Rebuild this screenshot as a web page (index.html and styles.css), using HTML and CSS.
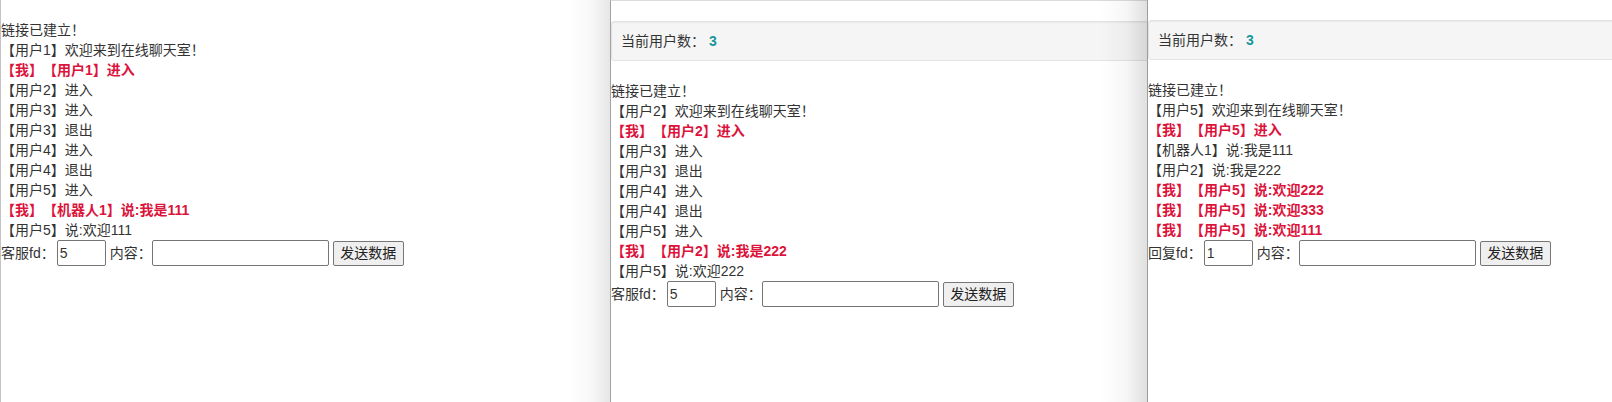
FILE: index.html
```html
<!DOCTYPE html>
<html lang="zh-CN">
<head>
<meta charset="utf-8">
<title>在线聊天室</title>
<link rel="stylesheet" href="styles.css">
</head>
<body>
<div class="desktop">
  <section class="win win-1">
    <div class="log">
      <div class="msg">链接已建立！</div>
      <div class="msg">【用户1】欢迎来到在线聊天室！</div>
      <div class="msg me">【我】【用户1】进入</div>
      <div class="msg">【用户2】进入</div>
      <div class="msg">【用户3】进入</div>
      <div class="msg">【用户3】退出</div>
      <div class="msg">【用户4】进入</div>
      <div class="msg">【用户4】退出</div>
      <div class="msg">【用户5】进入</div>
      <div class="msg me">【我】【机器人1】说:我是111</div>
      <div class="msg">【用户5】说:欢迎111</div>
    </div>
    <div class="form">
      <span class="label">客服fd：</span>
      <input class="fd" type="text" value="5">
      <span class="label label-gap">内容：</span>
      <input class="content" type="text">
      <button class="send" type="button">发送数据</button>
    </div>
  </section>

  <section class="win win-2">
    <div class="well">当前用户数： <b class="count">3</b></div>
    <div class="log">
      <div class="msg">链接已建立！</div>
      <div class="msg">【用户2】欢迎来到在线聊天室！</div>
      <div class="msg me">【我】【用户2】进入</div>
      <div class="msg">【用户3】进入</div>
      <div class="msg">【用户3】退出</div>
      <div class="msg">【用户4】进入</div>
      <div class="msg">【用户4】退出</div>
      <div class="msg">【用户5】进入</div>
      <div class="msg me">【我】【用户2】说:我是222</div>
      <div class="msg">【用户5】说:欢迎222</div>
    </div>
    <div class="form">
      <span class="label">客服fd：</span>
      <input class="fd" type="text" value="5">
      <span class="label label-gap">内容：</span>
      <input class="content" type="text">
      <button class="send" type="button">发送数据</button>
    </div>
  </section>

  <section class="win win-3">
    <div class="well">当前用户数： <b class="count">3</b></div>
    <div class="log">
      <div class="msg">链接已建立！</div>
      <div class="msg">【用户5】欢迎来到在线聊天室！</div>
      <div class="msg me">【我】【用户5】进入</div>
      <div class="msg">【机器人1】说:我是111</div>
      <div class="msg">【用户2】说:我是222</div>
      <div class="msg me">【我】【用户5】说:欢迎222</div>
      <div class="msg me">【我】【用户5】说:欢迎333</div>
      <div class="msg me">【我】【用户5】说:欢迎111</div>
    </div>
    <div class="form">
      <span class="label">回复fd：</span>
      <input class="fd" type="text" value="1">
      <span class="label label-gap">内容：</span>
      <input class="content" type="text">
      <button class="send" type="button">发送数据</button>
    </div>
  </section>
</div>
</body>
</html>
```

FILE: styles.css
```css
html, body {
  margin: 0;
  padding: 0;
  background: #fff;
}

body {
  font-family: "Liberation Sans", "Noto Sans CJK SC", sans-serif;
  font-size: 14px;
  line-height: 20px;
  color: #333;
  text-spacing-trim: space-all;
}

.desktop {
  display: flex;
  height: 402px;
  overflow: hidden;
}

.win {
  position: relative;
  flex: none;
  box-sizing: border-box;
  height: 402px;
  background: #fff;
  border-left: 1px solid #b4b4b4;
  padding-top: 20px;
}

.win-1 {
  width: 610px;
  border-left-color: #c4c4c4;
}

.win-2 {
  width: 537px;
  border-top: 1px solid #dcdcdc;
}

.win-3 {
  flex: 1;
}

.win-2::before,
.win-3::before {
  content: "";
  position: absolute;
  top: 0;
  bottom: 0;
  right: 100%;
  pointer-events: none;
}

.win-2::before {
  top: -1px;
  width: 42px;
  background: linear-gradient(to right, rgba(0, 0, 0, 0), rgba(0, 0, 0, 0.03) 55%, rgba(0, 0, 0, 0.1));
}

.win-3::before {
  width: 48px;
  background: linear-gradient(to right, rgba(0, 0, 0, 0), rgba(0, 0, 0, 0.035) 55%, rgba(0, 0, 0, 0.13));
}

.well {
  box-sizing: border-box;
  height: 40px;
  margin: 0 -40px 20px 0;
  padding: 9px;
  background: #f5f5f5;
  border: 1px solid #e3e3e3;
  border-radius: 3px;
  box-shadow: inset 0 1px 1px rgba(0, 0, 0, 0.05);
  white-space: nowrap;
}

.count {
  color: #16979b;
  font-weight: bold;
}

.msg {
  white-space: nowrap;
}

.me {
  color: #dc143c;
  font-weight: bold;
}

.form {
  display: flex;
  align-items: center;
  height: 26px;
  white-space: nowrap;
}

.label-gap {
  margin-left: 4px;
}

.fd,
.content,
.send {
  box-sizing: border-box;
  height: 26px;
  margin: 0;
  font-family: inherit;
  font-size: 14px;
  line-height: 20px;
  color: #333;
  border: 1px solid #767676;
  border-radius: 2px;
  text-spacing-trim: space-all;
}

.fd,
.content {
  padding: 1px 2px;
  background: #fff;
}

.fd {
  width: 49px;
  margin-left: 2px;
}

.content {
  width: 177px;
}

.send {
  width: 71px;
  height: 25px;
  margin-left: 4px;
  padding: 1px 6px;
  background: #efefef;
  color: #222;
}
```
